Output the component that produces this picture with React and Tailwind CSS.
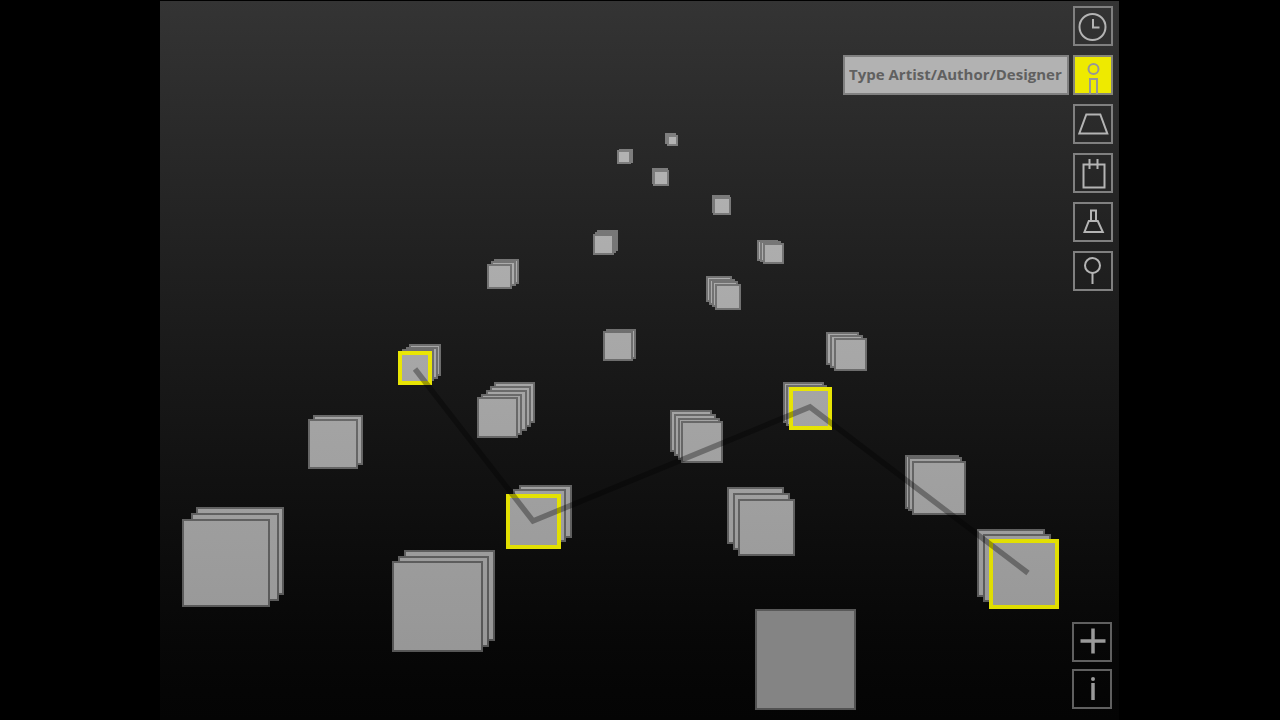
import React from "react";

// Each stack lists its cards from back to front as [x, y], all of one size.
const stacks = [
  { size: 11, cards: [[665, 133], [667, 135]] },
  { size: 14, cards: [[619, 149], [617, 150]] },
  { size: 16, cards: [[652, 168], [653, 170]] },
  { size: 18, cards: [[712, 195], [713, 197]] },
  { size: 21, cards: [[597, 230], [595, 232], [593, 234]] },
  { size: 21, cards: [[757, 240], [760, 241], [763, 243]] },
  { size: 26, cards: [[706, 276], [709, 279], [712, 281], [715, 284]] },
  { size: 25, cards: [[494, 259], [491, 261], [487, 264]] },
  { size: 34, active: true, cards: [[409, 344], [406, 347], [402, 349], [398, 351]] },
  { size: 41, cards: [[494, 382], [490, 386], [486, 390], [481, 394], [477, 397]] },
  { size: 30, cards: [[606, 329], [603, 331]] },
  { size: 33, cards: [[826, 332], [830, 335], [834, 338]] },
  { size: 43, active: true, cards: [[783, 382], [786, 385], [789, 387]] },
  { size: 42, cards: [[670, 410], [674, 414], [678, 418], [681, 421]] },
  { size: 50, cards: [[313, 415], [308, 419]] },
  { size: 88, cards: [[196, 507], [191, 513], [182, 519]] },
  { size: 55, active: true, cards: [[519, 485], [513, 489], [506, 494]] },
  { size: 91, cards: [[404, 550], [398, 556], [392, 561]] },
  { size: 57, cards: [[727, 487], [733, 493], [738, 499]] },
  { size: 101, dim: true, cards: [[755, 609]] },
  { size: 54, cards: [[905, 455], [908, 457], [912, 461]] },
  { size: 70, active: true, cards: [[977, 529], [983, 534], [989, 539]] },
];

function Card({ x, y, size, active, dim }) {
  const w = active ? 4 : 2;
  return (
    <rect
      x={x + w / 2}
      y={y + w / 2}
      width={size - w}
      height={size - w}
      strokeWidth={w}
      fill={dim ? "#848484" : "url(#cardFill)"}
      stroke={active ? "url(#activeEdge)" : "url(#cardEdge)"}
    />
  );
}

function Field() {
  const span = { gradientUnits: "userSpaceOnUse", x1: 0, y1: 120, x2: 0, y2: 700 };
  return (
    <svg
      className="absolute inset-0 h-full w-full"
      viewBox="160 0 959 720"
      role="img"
      aria-label="Stacks of works with a path linking four of them"
    >
      <defs>
        <linearGradient id="cardFill" {...span}>
          <stop offset="0" stopColor="#b4b4b4" />
          <stop offset="1" stopColor="#949494" />
        </linearGradient>
        <linearGradient id="cardEdge" {...span}>
          <stop offset="0" stopColor="#808080" />
          <stop offset="1" stopColor="#525252" />
        </linearGradient>
        <linearGradient id="activeEdge" {...span}>
          <stop offset="0" stopColor="#f2ee08" />
          <stop offset="1" stopColor="#dcda00" />
        </linearGradient>
      </defs>
      {stacks.map(({ size, active, dim, cards }, s) => (
        <g key={s}>
          {cards.map(([x, y], i) => {
            const front = i === cards.length - 1;
            return (
              <Card
                key={i}
                x={x}
                y={y}
                size={active && !front ? size - 2 : size}
                active={active && front}
                dim={dim}
              />
            );
          })}
        </g>
      ))}
      <polyline
        points="415,369 533,521 810,407 1028,573"
        fill="none"
        stroke="#000"
        strokeOpacity="0.33"
        strokeWidth="5.5"
      />
    </svg>
  );
}

const icons = {
  clock: (
    <>
      <circle cx="19.5" cy="21" r="13" />
      <path d="M20 13v8.5h6.5" />
    </>
  ),
  person: (
    <>
      <circle cx="20.5" cy="14" r="5" />
      <path d="M17 39V24h7v15" />
    </>
  ),
  trapezoid: <path d="M13.3 10.5h14l7 19h-28z" />,
  calendar: (
    <>
      <path d="M10.5 11.5h21v23h-21z" />
      <path d="M16.5 6v10M24.5 6v10" />
    </>
  ),
  flask: (
    <>
      <path d="M18 18.5V8.5h5v10" />
      <path d="M15.8 19h9l5 11H11.5z" />
    </>
  ),
  pin: (
    <>
      <circle cx="19.5" cy="14.5" r="7.5" />
      <path d="M19.5 22V33" />
    </>
  ),
  plus: <path strokeWidth="3.5" d="M21 6.5v25M8.5 19h25" />,
  info: (
    <>
      <circle cx="21" cy="10" r="2" fill="currentColor" stroke="none" />
      <path strokeWidth="3.5" d="M21 14v17" />
    </>
  ),
};

function Tool({ icon, label, tone }) {
  return (
    <button
      type="button"
      aria-label={label}
      className={"flex size-10 shrink-0 items-center justify-center border-2 " + tone}
    >
      <svg
        className="size-10 shrink-0"
        viewBox="0 0 40 40"
        fill="none"
        stroke="currentColor"
        strokeWidth="2"
        aria-hidden="true"
      >
        {icons[icon]}
      </svg>
    </button>
  );
}

const plain = "border-[#808080] text-[#b4b4b4]";
const selected = "border-[#858578] bg-[#eeea00] text-[#979797]";
const low = "border-[#606060] text-[#9a9a9a]";

export default function App() {
  return (
    <main className="min-h-screen bg-black pt-px font-['Open_Sans','Noto_Sans',sans-serif]">
      <div className="relative mx-auto flex min-h-[calc(100vh-1px)] max-w-[960px] flex-col border-r border-black bg-linear-to-b from-[#343434] via-[#191919] to-[#040404]">
        <div className="absolute inset-x-0 -top-px bottom-0">
          <Field />
        </div>
        <div className="relative flex flex-1 flex-col items-end justify-between pt-[5px] pr-[6px] pb-[11px]">
          <nav aria-label="Filters" className="flex flex-col items-end gap-[9px]">
            <Tool icon="clock" label="Time" tone={plain} />
            <div className="flex gap-1">
              <input
                type="text"
                aria-label="Artist, author or designer"
                placeholder="Type Artist/Author/Designer"
                className="h-10 w-[226px] border-2 border-[#808080] bg-[#b2b2b2] pr-0 pb-0.5 pl-1 text-[15px] font-bold text-[#606060] placeholder:text-[#606060] placeholder:opacity-100"
              />
              <Tool icon="person" label="Person" tone={selected} />
            </div>
            <Tool icon="trapezoid" label="Shape" tone={plain} />
            <Tool icon="calendar" label="Calendar" tone={plain} />
            <Tool icon="flask" label="Technique" tone={plain} />
            <Tool icon="pin" label="Place" tone={plain} />
          </nav>
          <div className="mr-px flex flex-col gap-[7px]">
            <Tool icon="plus" label="Add" tone={low} />
            <Tool icon="info" label="Information" tone={low} />
          </div>
        </div>
      </div>
    </main>
  );
}
